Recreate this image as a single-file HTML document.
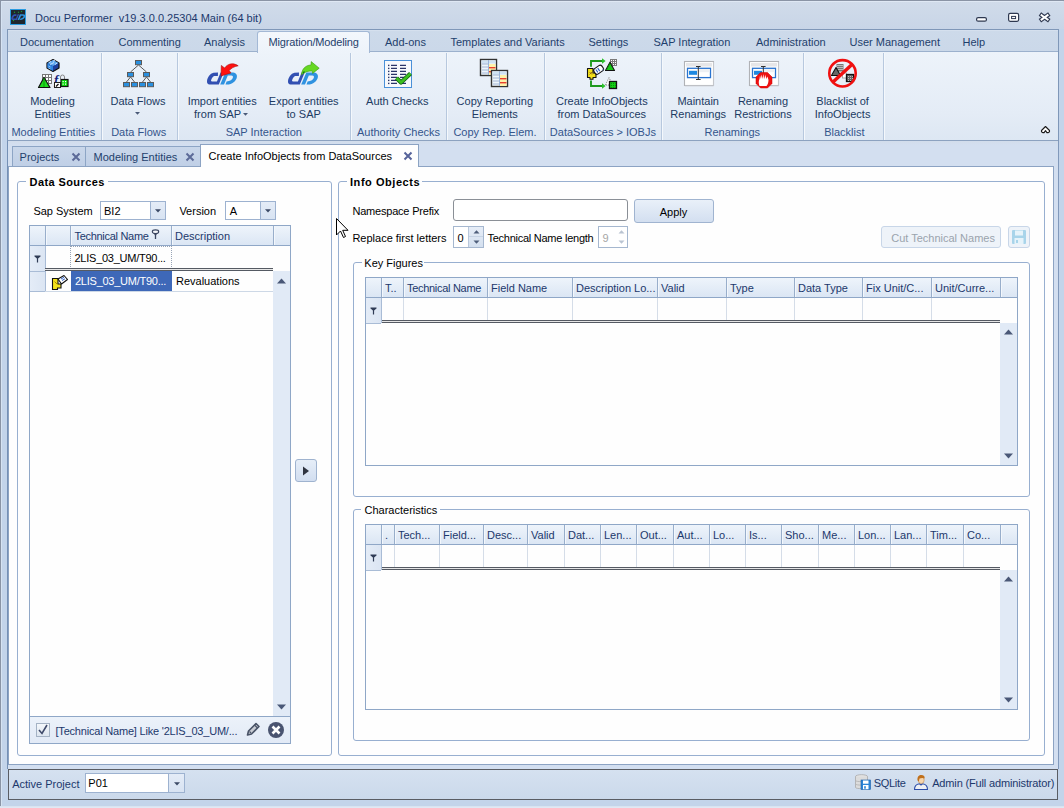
<!DOCTYPE html><html><head><meta charset="utf-8"><style>
html,body{margin:0;padding:0;width:1064px;height:808px;overflow:hidden;background:#c3d4ea}
body>div,body>svg{position:absolute}
.t{position:absolute;white-space:nowrap;font-family:"Liberation Sans",sans-serif;font-size:11px;line-height:13px;letter-spacing:0px}
</style></head><body>
<div style="left:0px;top:0px;width:1064px;height:808px;background:#c3d4ea"></div>
<div style="left:0px;top:0px;width:1064px;height:29px;background:linear-gradient(#d1dcea,#c8d5e7)"></div>
<div style="left:0px;top:0px;width:1064px;height:1px;background:#8a94a5;"></div>
<div style="left:1px;top:1px;width:1062px;height:1px;background:#dfe8f4;"></div>
<div style="left:0px;top:0px;width:1px;height:808px;background:#8a94a5;"></div>
<div style="left:1px;top:1px;width:1px;height:807px;background:#d6e3f2;"></div>
<div style="left:0px;top:806px;width:1064px;height:1px;background:#d9e3f0;"></div>
<div style="left:0px;top:807px;width:1064px;height:1px;background:#dfe8f4;"></div>
<svg style="left:10px;top:9px" width="16" height="16" viewBox="0 0 16 16"><rect x="0" y="0" width="16" height="16" fill="#2a9be0"/><rect x="1" y="1" width="14" height="14" fill="#1e262e"/><g transform="translate(-0.6,-1.6) scale(0.47)">
<path d="M15 14.4 L10.5 14.8 C7 15.5 4.5 19.5 4 23 C3.8 25 4.8 26.6 6.5 26.6 L15.8 26.6 L20.7 14.5 L17.6 14.5 L13.9 23.5 L8.9 23.5 C8.2 23.5 7.9 23 8.1 22.3 C8.7 20 10 18.5 11.2 18.1 L14.9 18.1 Z" fill="#3250b2"/>
<path d="M17.2 26.6 L22.3 14.4 L29 14.4 C32.6 14.4 34.3 16.2 33.9 19 C33.4 23 29 26.6 24 26.6 L22.5 26.6 L23.6 23.5 C27 23.5 29.4 21.6 29.9 19.6 C30.2 18.3 29.6 17.6 28.2 17.6 L24.8 17.6 L21 26.6 Z" fill="#2f92e0"/>
</g><circle cx="4.5" cy="3.3" r="0.7" fill="#1c9a3a"/><circle cx="8.5" cy="3.3" r="0.7" fill="#1c9a3a"/><circle cx="11.5" cy="2.5" r="0.7" fill="#1c9a3a"/><circle cx="3.5" cy="11.5" r="0.7" fill="#1c9a3a"/></svg>
<div class="t" style="left:35px;top:12px;color:#1c386c;">Docu Performer&nbsp; v19.3.0.0.25304 Main (64 bit)</div>
<svg style="left:972px;top:8px" width="84" height="18" viewBox="0 0 84 18">
<rect x="4.6" y="9.6" width="9.8" height="3.6" rx="1.5" fill="#fff" stroke="#2e3850" stroke-width="1.2"/>
<rect x="36.6" y="5.4" width="10" height="7.9" rx="1.5" fill="#fff" stroke="#2e3850" stroke-width="1.2"/>
<rect x="39.6" y="8.4" width="4" height="2.2" fill="#fff" stroke="#2e3850" stroke-width="1"/>
<path d="M69.6 7.2 L75.6 11.5 M75.6 7.2 L69.6 11.5" stroke="#2e3850" stroke-width="4.2" stroke-linecap="square"/>
<path d="M69.6 7.2 L75.6 11.5 M75.6 7.2 L69.6 11.5" stroke="#fff" stroke-width="2" stroke-linecap="square"/>
</svg>
<div style="left:7px;top:29px;width:1052px;height:112px;background:linear-gradient(#cddaea,#c6d4e7 60%,#c8d6e9);border:1px solid #7f97b8;box-sizing:border-box"></div>
<div style="left:8px;top:30px;width:1050px;height:1px;background:#d5e0ee;"></div>
<div style="left:8px;top:51px;width:1050px;height:1px;background:#9cb1cd;"></div>
<div style="left:8px;top:52px;width:1050px;height:88px;background:linear-gradient(#edf3fa 0%,#e4ecf6 70%,#dde7f3 100%)"></div>
<div style="left:8px;top:140px;width:1050px;height:1px;background:#8ca2c0;"></div>
<div style="left:257px;top:31px;width:113px;height:22px;background:linear-gradient(#f3f7fc,#edf3fa);border:1px solid #a3b8d5;border-bottom:none;border-radius:3px 3px 0 0;box-sizing:border-box"></div>
<div class="t" style="left:20px;top:36px;color:#1f3f6c;">Documentation</div>
<div class="t" style="left:118.5px;top:36px;color:#1f3f6c;">Commenting</div>
<div class="t" style="left:204px;top:36px;color:#1f3f6c;">Analysis</div>
<div class="t" style="left:268.5px;top:36px;color:#1f3f6c;;letter-spacing:-0.15px">Migration/Modeling</div>
<div class="t" style="left:385px;top:36px;color:#1f3f6c;">Add-ons</div>
<div class="t" style="left:450.5px;top:36px;color:#1f3f6c;">Templates and Variants</div>
<div class="t" style="left:588.5px;top:36px;color:#1f3f6c;">Settings</div>
<div class="t" style="left:653.5px;top:36px;color:#1f3f6c;">SAP Integration</div>
<div class="t" style="left:756px;top:36px;color:#1f3f6c;">Administration</div>
<div class="t" style="left:849.5px;top:36px;color:#1f3f6c;">User Management</div>
<div class="t" style="left:962.5px;top:36px;color:#1f3f6c;">Help</div>
<div style="left:101px;top:53px;width:1px;height:87px;background:#b7c8de;"></div>
<div style="left:102px;top:53px;width:1px;height:87px;background:#f4f8fc;"></div>
<div style="left:177px;top:53px;width:1px;height:87px;background:#b7c8de;"></div>
<div style="left:178px;top:53px;width:1px;height:87px;background:#f4f8fc;"></div>
<div style="left:350px;top:53px;width:1px;height:87px;background:#b7c8de;"></div>
<div style="left:351px;top:53px;width:1px;height:87px;background:#f4f8fc;"></div>
<div style="left:446px;top:53px;width:1px;height:87px;background:#b7c8de;"></div>
<div style="left:447px;top:53px;width:1px;height:87px;background:#f4f8fc;"></div>
<div style="left:544px;top:53px;width:1px;height:87px;background:#b7c8de;"></div>
<div style="left:545px;top:53px;width:1px;height:87px;background:#f4f8fc;"></div>
<div style="left:661px;top:53px;width:1px;height:87px;background:#b7c8de;"></div>
<div style="left:662px;top:53px;width:1px;height:87px;background:#f4f8fc;"></div>
<div style="left:803px;top:53px;width:1px;height:87px;background:#b7c8de;"></div>
<div style="left:804px;top:53px;width:1px;height:87px;background:#f4f8fc;"></div>
<div style="left:883px;top:53px;width:1px;height:87px;background:#b7c8de;"></div>
<div style="left:884px;top:53px;width:1px;height:87px;background:#f4f8fc;"></div>
<div class="t" style="left:-47.5px;top:95px;width:200px;text-align:center;color:#203a62;">Modeling</div>
<div class="t" style="left:-47.5px;top:108px;width:200px;text-align:center;color:#203a62;">Entities</div>
<div class="t" style="left:38.0px;top:95px;width:200px;text-align:center;color:#203a62;">Data Flows</div>
<div class="t" style="left:122.19999999999999px;top:95px;width:200px;text-align:center;color:#203a62;">Import entities</div>
<div class="t" style="left:122.19999999999999px;top:108px;width:200px;text-align:center;color:#203a62;">from SAP&nbsp;&nbsp;&nbsp;</div>
<div class="t" style="left:203.7px;top:95px;width:200px;text-align:center;color:#203a62;">Export entities</div>
<div class="t" style="left:203.7px;top:108px;width:200px;text-align:center;color:#203a62;">to SAP</div>
<div class="t" style="left:297.3px;top:95px;width:200px;text-align:center;color:#203a62;">Auth Checks</div>
<div class="t" style="left:394.8px;top:95px;width:200px;text-align:center;color:#203a62;">Copy Reporting</div>
<div class="t" style="left:394.8px;top:108px;width:200px;text-align:center;color:#203a62;">Elements</div>
<div class="t" style="left:501.79999999999995px;top:95px;width:200px;text-align:center;color:#203a62;">Create InfoObjects</div>
<div class="t" style="left:501.79999999999995px;top:108px;width:200px;text-align:center;color:#203a62;">from DataSources</div>
<div class="t" style="left:598.2px;top:95px;width:200px;text-align:center;color:#203a62;">Maintain</div>
<div class="t" style="left:598.2px;top:108px;width:200px;text-align:center;color:#203a62;">Renamings</div>
<div class="t" style="left:663.0px;top:95px;width:200px;text-align:center;color:#203a62;">Renaming</div>
<div class="t" style="left:663.0px;top:108px;width:200px;text-align:center;color:#203a62;">Restrictions</div>
<div class="t" style="left:742.6px;top:95px;width:200px;text-align:center;color:#203a62;">Blacklist of</div>
<div class="t" style="left:742.6px;top:108px;width:200px;text-align:center;color:#203a62;">InfoObjects</div>
<div class="t" style="left:-46.7px;top:126px;width:200px;text-align:center;color:#34558c;">Modeling Entities</div>
<div class="t" style="left:38.69999999999999px;top:126px;width:200px;text-align:center;color:#34558c;">Data Flows</div>
<div class="t" style="left:163.8px;top:126px;width:200px;text-align:center;color:#34558c;">SAP Interaction</div>
<div class="t" style="left:298.5px;top:126px;width:200px;text-align:center;color:#34558c;">Authority Checks</div>
<div class="t" style="left:395.0px;top:126px;width:200px;text-align:center;color:#34558c;">Copy Rep. Elem.</div>
<div class="t" style="left:502.9px;top:126px;width:200px;text-align:center;color:#34558c;">DataSources &gt; IOBJs</div>
<div class="t" style="left:632.3px;top:126px;width:200px;text-align:center;color:#34558c;">Renamings</div>
<div class="t" style="left:744.4px;top:126px;width:200px;text-align:center;color:#34558c;">Blacklist</div>
<svg style="left:135.3px;top:112.2px" width="6" height="3" viewBox="0 0 6 3"><path d="M0 0H5L2.5 2.8Z" fill="#4a5a78"/></svg>
<svg style="left:243.3px;top:113.3px" width="6" height="3" viewBox="0 0 6 3"><path d="M0 0H5L2.5 2.8Z" fill="#4a5a78"/></svg>
<svg style="left:1040px;top:125px" width="11" height="9" viewBox="0 0 11 9"><path d="M1.5 5.5 L5.5 1.5 L9.5 5.5 L9.5 6.8 L8.3 7.6 L6.9 7.6 L5.5 5.6 L4.1 7.6 L2.7 7.6 L1.5 6.8 Z" fill="#fff" stroke="#1a1a1a" stroke-width="1.1" stroke-linejoin="round"/></svg>
<div style="left:7px;top:141px;width:1052px;height:628px;background:linear-gradient(#d2ddeb 0px,#d3dff0 4px,#d3dff0 100%);border-left:1px solid #7590b5;border-right:1px solid #8199bb;box-sizing:border-box"></div>
<div style="left:12px;top:146px;width:74px;height:21px;background:linear-gradient(#c9d7ea,#bfcfe6);border:1px solid #8da5c5;border-bottom:none;box-sizing:border-box"></div>
<div style="left:85px;top:146px;width:116px;height:21px;background:linear-gradient(#c9d7ea,#bfcfe6);border:1px solid #8da5c5;border-bottom:none;box-sizing:border-box"></div>
<div class="t" style="left:19.6px;top:151px;color:#1f3f6c;">Projects</div>
<div class="t" style="left:93.5px;top:151px;color:#1f3f6c;">Modeling Entities</div>
<div style="left:8px;top:166px;width:1046px;height:599px;background:#fefefe;border:1px solid #8ca3c3;box-sizing:border-box"></div>
<div style="left:200px;top:144px;width:219px;height:23px;background:#fefefe;border:1px solid #8ca3c3;border-bottom:none;box-sizing:border-box"></div>
<div class="t" style="left:208.6px;top:150px;color:#000;">Create InfoObjects from DataSources</div>
<svg style="left:70.5px;top:151.5px" width="10" height="10" viewBox="0 0 10 10"><path d="M1.5 1.5L8.5 8.5M8.5 1.5L1.5 8.5" stroke="#5c6a98" stroke-width="2"/></svg>
<svg style="left:185px;top:151.5px" width="10" height="10" viewBox="0 0 10 10"><path d="M1.5 1.5L8.5 8.5M8.5 1.5L1.5 8.5" stroke="#5c6a98" stroke-width="2"/></svg>
<svg style="left:402.5px;top:150.5px" width="10" height="10" viewBox="0 0 10 10"><path d="M1.5 1.5L8.5 8.5M8.5 1.5L1.5 8.5" stroke="#56639a" stroke-width="2"/></svg>
<div style="left:8px;top:769px;width:1050px;height:31px;background:linear-gradient(#d5e1f0,#cbd9eb);border:1px solid #5a5d64;box-sizing:border-box"></div>
<div class="t" style="left:12.2px;top:778px;color:#1c386c;">Active Project</div>
<div class="t" style="left:873.7px;top:777px;color:#1c386c;;letter-spacing:-0.3px">SQLite</div>
<div class="t" style="left:932.2px;top:777px;color:#1c386c;;letter-spacing:-0.15px">Admin (Full administrator)</div>
<div style="left:17px;top:181px;width:315px;height:575px;border:1px solid #98afd0;border-radius:3px;box-sizing:border-box"></div>
<div style="left:26px;top:180px;width:82px;height:3px;background:#fefefe"></div>
<div class="t" style="left:29.6px;top:176px;color:#000;font-weight:bold;letter-spacing:0.4px">Data Sources</div>
<div style="left:338px;top:181px;width:707px;height:575px;border:1px solid #98afd0;border-radius:3px;box-sizing:border-box"></div>
<div style="left:347px;top:180px;width:75px;height:3px;background:#fefefe"></div>
<div class="t" style="left:350px;top:176px;color:#000;font-weight:bold;letter-spacing:0.55px">Info Objects</div>
<div style="left:353px;top:262px;width:677px;height:235px;border:1px solid #98afd0;border-radius:3px;box-sizing:border-box"></div>
<div style="left:362px;top:261px;width:62px;height:3px;background:#fefefe"></div>
<div class="t" style="left:364.3px;top:257px;color:#000;">Key Figures</div>
<div style="left:353px;top:509px;width:677px;height:232px;border:1px solid #98afd0;border-radius:3px;box-sizing:border-box"></div>
<div style="left:361px;top:508px;width:79px;height:3px;background:#fefefe"></div>
<div class="t" style="left:364.5px;top:504px;color:#000;">Characteristics</div>
<div class="t" style="left:33.4px;top:205px;color:#000;">Sap System</div>
<div style="left:100px;top:201px;width:66px;height:19px;background:#fff;border:1px solid #9db2d0;box-sizing:border-box"></div>
<div style="left:150px;top:202px;width:15px;height:17px;background:linear-gradient(#e4ecf7,#d8e3f2);border-left:1px solid #9db2d0;box-sizing:border-box"></div>
<svg style="left:155.0px;top:208.5px" width="6" height="4" viewBox="0 0 6 4"><path d="M0 0.2H6L3 3.4Z" fill="#3c4a66"/></svg>
<div class="t" style="left:104px;top:205px;color:#000;">BI2</div>
<div class="t" style="left:179.4px;top:205px;color:#000;">Version</div>
<div style="left:225px;top:201px;width:51px;height:19px;background:#fff;border:1px solid #9db2d0;box-sizing:border-box"></div>
<div style="left:260px;top:202px;width:15px;height:17px;background:linear-gradient(#e4ecf7,#d8e3f2);border-left:1px solid #9db2d0;box-sizing:border-box"></div>
<svg style="left:265.0px;top:208.5px" width="6" height="4" viewBox="0 0 6 4"><path d="M0 0.2H6L3 3.4Z" fill="#3c4a66"/></svg>
<div class="t" style="left:229.7px;top:205px;color:#000;">A</div>
<div style="left:85px;top:773px;width:100px;height:20px;background:#fff;border:1px solid #9db2d0;box-sizing:border-box"></div>
<div style="left:168px;top:774px;width:16px;height:18px;background:linear-gradient(#e4ecf7,#d8e3f2);border-left:1px solid #9db2d0;box-sizing:border-box"></div>
<svg style="left:173.5px;top:781.5px" width="6" height="4" viewBox="0 0 6 4"><path d="M0 0.2H6L3 3.4Z" fill="#3c4a66"/></svg>
<div class="t" style="left:88.3px;top:777px;color:#000;">P01</div>
<div style="left:29px;top:225px;width:262px;height:519px;border:1px solid #8fa7c7;box-sizing:border-box;background:#fefefe"></div>
<div style="left:30px;top:226px;width:260px;height:19px;background:linear-gradient(#eef4fb,#dbe6f4)"></div>
<div style="left:30px;top:245px;width:260px;height:1px;background:#8fa7c7;"></div>
<div style="left:45px;top:226px;width:1px;height:19px;background:#98aecb;"></div>
<div style="left:46px;top:226px;width:1px;height:19px;background:#f3f7fc;"></div>
<div style="left:70px;top:226px;width:1px;height:19px;background:#98aecb;"></div>
<div style="left:71px;top:226px;width:1px;height:19px;background:#f3f7fc;"></div>
<div style="left:171px;top:226px;width:1px;height:19px;background:#98aecb;"></div>
<div style="left:172px;top:226px;width:1px;height:19px;background:#f3f7fc;"></div>
<div style="left:273px;top:226px;width:1px;height:19px;background:#98aecb;"></div>
<div style="left:274px;top:226px;width:1px;height:19px;background:#f3f7fc;"></div>
<div class="t" style="left:74.5px;top:230px;color:#1c386c;letter-spacing:-0.3px">Technical Name</div>
<svg style="left:151px;top:228.6px" width="9" height="11" viewBox="0 0 9 11"><path d="M1.2 2.8 L4.5 7 L7.8 2.8 Z" fill="#3a4560"/><ellipse cx="4.5" cy="2.7" rx="3.2" ry="1.8" fill="#f4f6fa" stroke="#3a4560" stroke-width="1.1"/><path d="M4.5 6 V10" stroke="#3a4560" stroke-width="1.3"/></svg>
<div class="t" style="left:175px;top:230px;color:#1c386c;">Description</div>
<div style="left:30px;top:246px;width:15px;height:45px;background:linear-gradient(90deg,#e4ecf7,#dbe5f3)"></div>
<div style="left:45px;top:246px;width:1px;height:45px;background:#a9bcd6;"></div>
<div style="left:30px;top:271px;width:15px;height:1px;background:#a9bcd6;"></div>
<div style="left:30px;top:291px;width:15px;height:1px;background:#a9bcd6;"></div>
<svg style="left:34px;top:255px" width="8" height="8" viewBox="0 0 8 8"><path d="M0.5 0.5H6.5V1.6L4.1 3.6V7.5H2.9V3.6L0.5 1.6Z" fill="#2f3b55"/></svg>
<div style="left:70px;top:246px;width:102px;height:23px;border:1px dotted #98a4b6;box-sizing:border-box"></div>
<div class="t" style="left:74.5px;top:251.5px;color:#000;;letter-spacing:-0.25px">2LIS_03_UM/T90...</div>
<div style="left:45px;top:268px;width:228px;height:1px;background:#555a63;"></div>
<div style="left:45px;top:270px;width:228px;height:1px;background:#555a63;"></div>
<div style="left:45px;top:269px;width:228px;height:1px;background:#e8e8e8;"></div>
<div style="left:71px;top:271px;width:101px;height:20px;background:#3e68b8"></div>
<div class="t" style="left:75px;top:275px;color:#fff;;letter-spacing:-0.25px">2LIS_03_UM/T90...</div>
<div class="t" style="left:176px;top:275px;color:#000;">Revaluations</div>
<div style="left:45px;top:291px;width:228px;height:1px;background:#cdd8e6;"></div>
<svg style="left:51px;top:273px" width="18" height="18" viewBox="0 0 18 18">
<path d="M1.5 5.5 H7 V11 L10 11 L10 15 H6.5 V16.5 H1.5 Z" fill="#f2e21a" stroke="#111" stroke-width="1.1"/>
<path d="M7 6 L13 2.5 L16.5 6.5 L10.5 11 Z" fill="#fff" stroke="#111" stroke-width="1.1" stroke-linejoin="round"/>
<path d="M10 6 L13 4.3 M11 7.5 L14 5.8" stroke="#2a5ec8" stroke-width="1"/>
<path d="M3.5 8.5 L6 11" stroke="#a07000" stroke-width="0.8"/></svg>
<div style="left:273px;top:271px;width:17px;height:445px;background:#e1eaf6"></div>
<svg style="left:277px;top:278px" width="10" height="6" viewBox="0 0 10 6"><path d="M0 5.5H9L4.5 0.5Z" fill="#4a5877"/></svg>
<svg style="left:277px;top:704px" width="10" height="6" viewBox="0 0 10 6"><path d="M0 0.5H9L4.5 5.5Z" fill="#4a5877"/></svg>
<div style="left:30px;top:716px;width:260px;height:27px;background:linear-gradient(#ecf2fa,#e2eaf6)"></div>
<div style="left:30px;top:716px;width:260px;height:1px;background:#8fa7c7;"></div>
<div style="left:36px;top:723px;width:14px;height:14px;background:linear-gradient(#f4f7fb,#dde5ef);border:1px solid #a4b2c4;box-sizing:border-box"></div>
<svg style="left:38px;top:724px" width="10" height="11" viewBox="0 0 10 11"><path d="M1 6 L4 9.5 L9 1" fill="none" stroke="#3f4a6a" stroke-width="1.6"/></svg>
<div class="t" style="left:55.5px;top:725px;color:#1c386c;;letter-spacing:-0.2px">[Technical Name] Like '2LIS_03_UM/...</div>
<svg style="left:245px;top:721px" width="16" height="16" viewBox="0 0 16 16"><path d="M2.5 14 L3.5 10 L11 2.5 L14 5.5 L6.5 13 Z" fill="#c8ccd4" stroke="#4a5468" stroke-width="1.6" stroke-linejoin="round"/><path d="M9.5 4 L12.5 7 M4.5 10.5 L6 12" stroke="#4a5468" stroke-width="1.1"/></svg>
<svg style="left:267px;top:721px" width="18" height="18" viewBox="0 0 18 18"><circle cx="9" cy="9" r="8" fill="#4a5470"/><path d="M5.5 5.5L12.5 12.5M12.5 5.5L5.5 12.5" stroke="#fff" stroke-width="2.6"/></svg>
<div style="left:295px;top:459px;width:22px;height:23px;background:linear-gradient(#e6eef8,#d2def0);border:1px solid #9fb3cf;border-radius:3px;box-sizing:border-box"></div>
<svg style="left:302px;top:466px" width="8" height="10" viewBox="0 0 8 10"><path d="M1 0.5V9.5L7 5Z" fill="#2f3440"/></svg>
<div class="t" style="left:352.4px;top:205px;color:#000;;letter-spacing:-0.2px">Namespace Prefix</div>
<div style="left:453px;top:199px;width:175px;height:22px;background:#fff;border:1px solid #8a8f96;border-radius:3px;box-sizing:border-box"></div>
<div style="left:634px;top:199px;width:80px;height:24px;background:linear-gradient(#e9f0f9,#d3dff0);border:1px solid #a0b4d0;border-radius:3px;box-sizing:border-box"></div>
<div class="t" style="left:659.7px;top:206px;color:#000;">Apply</div>
<div class="t" style="left:352.4px;top:232px;color:#000;">Replace first letters</div>
<div style="left:453px;top:226px;width:31px;height:22px;background:#fff;border:1px solid #a5b7cf;box-sizing:border-box"></div>
<div style="left:468px;top:227px;width:15px;height:20px;background:linear-gradient(#e6edf7,#d4e0ef);border-left:1px solid #b8c7db;box-sizing:border-box"></div>
<svg style="left:472.5px;top:230px" width="7" height="14" viewBox="0 0 7 14"><path d="M0.5 3.5H6.5L3.5 0.3Z M0.5 10.5H6.5L3.5 13.7Z" fill="#4e5e7a"/></svg>
<div style="left:469px;top:236px;width:14px;height:1px;background:#c6d3e4;"></div>
<div class="t" style="left:457.6px;top:232px;color:#000;">0</div>
<div class="t" style="left:487.4px;top:232px;color:#000;;letter-spacing:-0.25px">Technical Name length</div>
<div style="left:598px;top:226px;width:30px;height:22px;background:#fff;border:1px solid #a5b7cf;box-sizing:border-box"></div>
<svg style="left:617.5px;top:230px" width="7" height="14" viewBox="0 0 7 14"><path d="M0.5 3.5H6.5L3.5 0.3Z M0.5 10.5H6.5L3.5 13.7Z" fill="#bac4d2"/></svg>
<div class="t" style="left:602.6px;top:232px;color:#a6a6a6;">9</div>
<div style="left:881px;top:226px;width:120px;height:22px;background:#eef3f9;border:1px solid #c8d6e8;border-radius:3px;box-sizing:border-box"></div>
<div class="t" style="left:891.2px;top:232px;color:#9aa3ad;">Cut Technical Names</div>
<div style="left:1008px;top:226px;width:22px;height:22px;background:#eef3f9;border:1px solid #c8d6e8;border-radius:3px;box-sizing:border-box"></div>
<svg style="left:1011px;top:229px" width="16" height="16" viewBox="0 0 16 16"><rect x="1" y="1" width="14" height="14" rx="1" fill="#a8d4ea"/><rect x="4" y="1.5" width="8" height="5" fill="#e6f3fa"/><rect x="3.5" y="9" width="9" height="6" fill="#e6f3fa"/><rect x="5" y="11" width="2" height="3" fill="#a8d4ea"/></svg>
<div style="left:365px;top:277px;width:653px;height:189px;border:1px solid #8fa7c7;box-sizing:border-box;background:#fefefe"></div>
<div style="left:366px;top:278px;width:651px;height:19px;background:linear-gradient(#eef4fb,#dbe6f4)"></div>
<div style="left:366px;top:297px;width:651px;height:1px;background:#8fa7c7;"></div>
<div style="left:381px;top:278px;width:1px;height:19px;background:#98aecb;"></div>
<div style="left:382px;top:278px;width:1px;height:19px;background:#f3f7fc;"></div>
<div style="left:403px;top:278px;width:1px;height:19px;background:#98aecb;"></div>
<div style="left:404px;top:278px;width:1px;height:19px;background:#f3f7fc;"></div>
<div style="left:487px;top:278px;width:1px;height:19px;background:#98aecb;"></div>
<div style="left:488px;top:278px;width:1px;height:19px;background:#f3f7fc;"></div>
<div style="left:572px;top:278px;width:1px;height:19px;background:#98aecb;"></div>
<div style="left:573px;top:278px;width:1px;height:19px;background:#f3f7fc;"></div>
<div style="left:657px;top:278px;width:1px;height:19px;background:#98aecb;"></div>
<div style="left:658px;top:278px;width:1px;height:19px;background:#f3f7fc;"></div>
<div style="left:726px;top:278px;width:1px;height:19px;background:#98aecb;"></div>
<div style="left:727px;top:278px;width:1px;height:19px;background:#f3f7fc;"></div>
<div style="left:794px;top:278px;width:1px;height:19px;background:#98aecb;"></div>
<div style="left:795px;top:278px;width:1px;height:19px;background:#f3f7fc;"></div>
<div style="left:862px;top:278px;width:1px;height:19px;background:#98aecb;"></div>
<div style="left:863px;top:278px;width:1px;height:19px;background:#f3f7fc;"></div>
<div style="left:931px;top:278px;width:1px;height:19px;background:#98aecb;"></div>
<div style="left:932px;top:278px;width:1px;height:19px;background:#f3f7fc;"></div>
<div style="left:1000px;top:278px;width:1px;height:19px;background:#98aecb;"></div>
<div style="left:1001px;top:278px;width:1px;height:19px;background:#f3f7fc;"></div>
<div class="t" style="left:385px;top:282px;color:#1c386c;">T..</div>
<div class="t" style="left:407px;top:282px;color:#1c386c;;letter-spacing:-0.3px">Technical Name</div>
<div class="t" style="left:491px;top:282px;color:#1c386c;">Field Name</div>
<div class="t" style="left:576px;top:282px;color:#1c386c;">Description Lo...</div>
<div class="t" style="left:661px;top:282px;color:#1c386c;">Valid</div>
<div class="t" style="left:730px;top:282px;color:#1c386c;">Type</div>
<div class="t" style="left:798px;top:282px;color:#1c386c;">Data Type</div>
<div class="t" style="left:866px;top:282px;color:#1c386c;">Fix Unit/C...</div>
<div class="t" style="left:935px;top:282px;color:#1c386c;">Unit/Curre...</div>
<div style="left:366px;top:298px;width:15px;height:25px;background:linear-gradient(90deg,#e4ecf7,#dbe5f3)"></div>
<div style="left:366px;top:323px;width:15px;height:1px;background:#a9bcd6;"></div>
<svg style="left:370px;top:307px" width="8" height="8" viewBox="0 0 8 8"><path d="M0.5 0.5H6.5V1.6L4.1 3.6V7.5H2.9V3.6L0.5 1.6Z" fill="#2f3b55"/></svg>
<div style="left:381px;top:298px;width:1px;height:23px;background:#d5dde8;"></div>
<div style="left:403px;top:298px;width:1px;height:23px;background:#d5dde8;"></div>
<div style="left:487px;top:298px;width:1px;height:23px;background:#d5dde8;"></div>
<div style="left:572px;top:298px;width:1px;height:23px;background:#d5dde8;"></div>
<div style="left:657px;top:298px;width:1px;height:23px;background:#d5dde8;"></div>
<div style="left:726px;top:298px;width:1px;height:23px;background:#d5dde8;"></div>
<div style="left:794px;top:298px;width:1px;height:23px;background:#d5dde8;"></div>
<div style="left:862px;top:298px;width:1px;height:23px;background:#d5dde8;"></div>
<div style="left:931px;top:298px;width:1px;height:23px;background:#d5dde8;"></div>
<div style="left:381px;top:298px;width:1px;height:25px;background:#a9bcd6;"></div>
<div style="left:382px;top:320px;width:618px;height:1px;background:#555a63;"></div>
<div style="left:382px;top:321px;width:618px;height:1px;background:#e6e6e6;"></div>
<div style="left:382px;top:322px;width:618px;height:1px;background:#555a63;"></div>
<div style="left:1000px;top:323px;width:17px;height:142px;background:#e1eaf6"></div>
<svg style="left:1004px;top:329px" width="10" height="6" viewBox="0 0 10 6"><path d="M0 5.5H9L4.5 0.5Z" fill="#4a5877"/></svg>
<svg style="left:1004px;top:453px" width="10" height="6" viewBox="0 0 10 6"><path d="M0 0.5H9L4.5 5.5Z" fill="#4a5877"/></svg>
<div style="left:365px;top:524px;width:653px;height:186px;border:1px solid #8fa7c7;box-sizing:border-box;background:#fefefe"></div>
<div style="left:366px;top:525px;width:651px;height:19px;background:linear-gradient(#eef4fb,#dbe6f4)"></div>
<div style="left:366px;top:544px;width:651px;height:1px;background:#8fa7c7;"></div>
<div style="left:381px;top:525px;width:1px;height:19px;background:#98aecb;"></div>
<div style="left:382px;top:525px;width:1px;height:19px;background:#f3f7fc;"></div>
<div style="left:394px;top:525px;width:1px;height:19px;background:#98aecb;"></div>
<div style="left:395px;top:525px;width:1px;height:19px;background:#f3f7fc;"></div>
<div style="left:439px;top:525px;width:1px;height:19px;background:#98aecb;"></div>
<div style="left:440px;top:525px;width:1px;height:19px;background:#f3f7fc;"></div>
<div style="left:483px;top:525px;width:1px;height:19px;background:#98aecb;"></div>
<div style="left:484px;top:525px;width:1px;height:19px;background:#f3f7fc;"></div>
<div style="left:527px;top:525px;width:1px;height:19px;background:#98aecb;"></div>
<div style="left:528px;top:525px;width:1px;height:19px;background:#f3f7fc;"></div>
<div style="left:564px;top:525px;width:1px;height:19px;background:#98aecb;"></div>
<div style="left:565px;top:525px;width:1px;height:19px;background:#f3f7fc;"></div>
<div style="left:600px;top:525px;width:1px;height:19px;background:#98aecb;"></div>
<div style="left:601px;top:525px;width:1px;height:19px;background:#f3f7fc;"></div>
<div style="left:636px;top:525px;width:1px;height:19px;background:#98aecb;"></div>
<div style="left:637px;top:525px;width:1px;height:19px;background:#f3f7fc;"></div>
<div style="left:673px;top:525px;width:1px;height:19px;background:#98aecb;"></div>
<div style="left:674px;top:525px;width:1px;height:19px;background:#f3f7fc;"></div>
<div style="left:709px;top:525px;width:1px;height:19px;background:#98aecb;"></div>
<div style="left:710px;top:525px;width:1px;height:19px;background:#f3f7fc;"></div>
<div style="left:745px;top:525px;width:1px;height:19px;background:#98aecb;"></div>
<div style="left:746px;top:525px;width:1px;height:19px;background:#f3f7fc;"></div>
<div style="left:781px;top:525px;width:1px;height:19px;background:#98aecb;"></div>
<div style="left:782px;top:525px;width:1px;height:19px;background:#f3f7fc;"></div>
<div style="left:818px;top:525px;width:1px;height:19px;background:#98aecb;"></div>
<div style="left:819px;top:525px;width:1px;height:19px;background:#f3f7fc;"></div>
<div style="left:854px;top:525px;width:1px;height:19px;background:#98aecb;"></div>
<div style="left:855px;top:525px;width:1px;height:19px;background:#f3f7fc;"></div>
<div style="left:890px;top:525px;width:1px;height:19px;background:#98aecb;"></div>
<div style="left:891px;top:525px;width:1px;height:19px;background:#f3f7fc;"></div>
<div style="left:926px;top:525px;width:1px;height:19px;background:#98aecb;"></div>
<div style="left:927px;top:525px;width:1px;height:19px;background:#f3f7fc;"></div>
<div style="left:963px;top:525px;width:1px;height:19px;background:#98aecb;"></div>
<div style="left:964px;top:525px;width:1px;height:19px;background:#f3f7fc;"></div>
<div style="left:1000px;top:525px;width:1px;height:19px;background:#98aecb;"></div>
<div style="left:1001px;top:525px;width:1px;height:19px;background:#f3f7fc;"></div>
<div class="t" style="left:385px;top:529px;color:#1c386c;">.</div>
<div class="t" style="left:398px;top:529px;color:#1c386c;">Tech...</div>
<div class="t" style="left:443px;top:529px;color:#1c386c;">Field...</div>
<div class="t" style="left:487px;top:529px;color:#1c386c;">Desc...</div>
<div class="t" style="left:531px;top:529px;color:#1c386c;">Valid</div>
<div class="t" style="left:568px;top:529px;color:#1c386c;">Dat...</div>
<div class="t" style="left:604px;top:529px;color:#1c386c;">Len...</div>
<div class="t" style="left:640px;top:529px;color:#1c386c;">Out...</div>
<div class="t" style="left:677px;top:529px;color:#1c386c;">Aut...</div>
<div class="t" style="left:713px;top:529px;color:#1c386c;">Lo...</div>
<div class="t" style="left:749px;top:529px;color:#1c386c;">Is...</div>
<div class="t" style="left:785px;top:529px;color:#1c386c;">Sho...</div>
<div class="t" style="left:822px;top:529px;color:#1c386c;">Me...</div>
<div class="t" style="left:858px;top:529px;color:#1c386c;">Lon...</div>
<div class="t" style="left:894px;top:529px;color:#1c386c;">Lan...</div>
<div class="t" style="left:930px;top:529px;color:#1c386c;">Tim...</div>
<div class="t" style="left:967px;top:529px;color:#1c386c;">Co...</div>
<div style="left:366px;top:545px;width:15px;height:25px;background:linear-gradient(90deg,#e4ecf7,#dbe5f3)"></div>
<div style="left:366px;top:570px;width:15px;height:1px;background:#a9bcd6;"></div>
<svg style="left:370px;top:554px" width="8" height="8" viewBox="0 0 8 8"><path d="M0.5 0.5H6.5V1.6L4.1 3.6V7.5H2.9V3.6L0.5 1.6Z" fill="#2f3b55"/></svg>
<div style="left:381px;top:545px;width:1px;height:23px;background:#d5dde8;"></div>
<div style="left:394px;top:545px;width:1px;height:23px;background:#d5dde8;"></div>
<div style="left:439px;top:545px;width:1px;height:23px;background:#d5dde8;"></div>
<div style="left:483px;top:545px;width:1px;height:23px;background:#d5dde8;"></div>
<div style="left:527px;top:545px;width:1px;height:23px;background:#d5dde8;"></div>
<div style="left:564px;top:545px;width:1px;height:23px;background:#d5dde8;"></div>
<div style="left:600px;top:545px;width:1px;height:23px;background:#d5dde8;"></div>
<div style="left:636px;top:545px;width:1px;height:23px;background:#d5dde8;"></div>
<div style="left:673px;top:545px;width:1px;height:23px;background:#d5dde8;"></div>
<div style="left:709px;top:545px;width:1px;height:23px;background:#d5dde8;"></div>
<div style="left:745px;top:545px;width:1px;height:23px;background:#d5dde8;"></div>
<div style="left:781px;top:545px;width:1px;height:23px;background:#d5dde8;"></div>
<div style="left:818px;top:545px;width:1px;height:23px;background:#d5dde8;"></div>
<div style="left:854px;top:545px;width:1px;height:23px;background:#d5dde8;"></div>
<div style="left:890px;top:545px;width:1px;height:23px;background:#d5dde8;"></div>
<div style="left:926px;top:545px;width:1px;height:23px;background:#d5dde8;"></div>
<div style="left:963px;top:545px;width:1px;height:23px;background:#d5dde8;"></div>
<div style="left:381px;top:545px;width:1px;height:25px;background:#a9bcd6;"></div>
<div style="left:382px;top:567px;width:618px;height:1px;background:#555a63;"></div>
<div style="left:382px;top:568px;width:618px;height:1px;background:#e6e6e6;"></div>
<div style="left:382px;top:569px;width:618px;height:1px;background:#555a63;"></div>
<div style="left:1000px;top:570px;width:17px;height:139px;background:#e1eaf6"></div>
<svg style="left:1004px;top:576px" width="10" height="6" viewBox="0 0 10 6"><path d="M0 5.5H9L4.5 0.5Z" fill="#4a5877"/></svg>
<svg style="left:1004px;top:697px" width="10" height="6" viewBox="0 0 10 6"><path d="M0 0.5H9L4.5 5.5Z" fill="#4a5877"/></svg>
<svg style="left:336px;top:218px" width="13" height="21" viewBox="0 0 13 21"><path d="M0.5 0.5 V17 L4.5 13 L7.5 19.5 L9.5 18.5 L6.7 12.3 L12 12.3 Z" fill="#fff" stroke="#000" stroke-width="1"/></svg>
<svg style="left:34px;top:56px" width="38" height="36" viewBox="0 0 38 36">
<path d="M13 7 L19 3.5 L25 7 L25 12 L19 15.5 L13 12 Z" fill="#1d3f9c" stroke="#111" stroke-width="1.2" stroke-linejoin="round"/>
<path d="M13.4 7 L19 3.9 L24.6 7 L19 10 Z" fill="#5da8f0"/>
<path d="M13.4 7.3 L19 10.2 L19 15 L13.4 11.8 Z" fill="#2f86e0"/>
<path d="M15 6.5 L17 5.5 M18 7.5 L20 6.5 M16 8.5 L18 7.5 M19 5 L21 4.5 M21 8.5 L23 7.2" stroke="#cfe6ff" stroke-width="0.9"/>
<path d="M14.5 10 L16.5 11 M14.5 12 L16.5 13" stroke="#9fd0ff" stroke-width="0.8"/>
<rect x="8.5" y="18.5" width="9" height="9" fill="#fff" stroke="#777" stroke-width="1"/>
<path d="M11.5 18.5V27.5M14.5 18.5V27.5M8.5 21.5H17.5M8.5 24.5H17.5" stroke="#777" stroke-width="1"/>
<path d="M4.5 31.5 L10 21.5 L16 31.5 Z" fill="#1edc1e" stroke="#111" stroke-width="1.2" stroke-linejoin="round"/>
<path d="M10 22 L10 31" stroke="#0a9a0a" stroke-width="1"/>
<text x="20" y="28" font-family="Liberation Serif" font-style="italic" font-weight="bold" font-size="13" fill="#12207a">f</text>
<path d="M26.5 23 V21 A2 2 0 0 1 30.5 21 V23" fill="none" stroke="#888" stroke-width="1"/>
<rect x="20.5" y="26.5" width="6" height="5" fill="#fff" stroke="#222" stroke-width="1"/>
<path d="M22 30.5 L24.5 28" stroke="#111" stroke-width="1.3"/>
<rect x="27" y="23.5" width="7" height="7" fill="#0bdc0b" stroke="#111" stroke-width="1.2"/>
<rect x="28.5" y="25.0" width="1.2" height="1.2" fill="#fff"/><rect x="28.5" y="27.5" width="1.2" height="1.2" fill="#fff"/><rect x="31.0" y="25.0" width="1.2" height="1.2" fill="#fff"/><rect x="31.0" y="27.5" width="1.2" height="1.2" fill="#fff"/>
</svg>
<svg style="left:120px;top:56px" width="38" height="36" viewBox="0 0 38 36"><path d="M18.5 9 L10.5 16 M18.5 9 L26.5 16 M10.5 21 L6.5 26 M10.5 21 L14.5 26 M26.5 21 L22.5 26 M26.5 21 L30.5 26" stroke="#5a5a5a" stroke-width="1"/><rect x="15.5" y="4.5" width="6" height="4.2" fill="#2a90e0" stroke="#5a5a5a" stroke-width="1"/><rect x="7.5" y="16.5" width="6" height="4.2" fill="#2a90e0" stroke="#5a5a5a" stroke-width="1"/><rect x="23.5" y="16.5" width="6" height="4.2" fill="#2a90e0" stroke="#5a5a5a" stroke-width="1"/><rect x="3.5" y="26.5" width="6" height="4.2" fill="#2a90e0" stroke="#5a5a5a" stroke-width="1"/><rect x="11.5" y="26.5" width="6" height="4.2" fill="#2a90e0" stroke="#5a5a5a" stroke-width="1"/><rect x="19.5" y="26.5" width="6" height="4.2" fill="#2a90e0" stroke="#5a5a5a" stroke-width="1"/><rect x="27.5" y="26.5" width="6" height="4.2" fill="#2a90e0" stroke="#5a5a5a" stroke-width="1"/></svg>
<svg style="left:203px;top:58px" width="38" height="36" viewBox="0 0 38 36">
<path d="M15 14.4 L10.5 14.8 C7 15.5 4.5 19.5 4 23 C3.8 25 4.8 26.6 6.5 26.6 L15.8 26.6 L20.7 14.5 L17.6 14.5 L13.9 23.5 L8.9 23.5 C8.2 23.5 7.9 23 8.1 22.3 C8.7 20 10 18.5 11.2 18.1 L14.9 18.1 Z" fill="#3250b2"/>
<path d="M17.2 26.6 L22.3 14.4 L29 14.4 C32.6 14.4 34.3 16.2 33.9 19 C33.4 23 29 26.6 24 26.6 L22.5 26.6 L23.6 23.5 C27 23.5 29.4 21.6 29.9 19.6 C30.2 18.3 29.6 17.6 28.2 17.6 L24.8 17.6 L21 26.6 Z" fill="#2f92e0"/>

<path d="M18.3 7.4 L21.6 10 C24.5 5.8 30 4.2 35.2 7.8 C31 8.6 28 10.2 26.2 12.6 L28 14.9 L18 18 Z" fill="#ff1010" stroke="#a81010" stroke-width="0.6" stroke-linejoin="round"/></svg>
<svg style="left:284px;top:58px" width="38" height="36" viewBox="0 0 38 36">
<path d="M15 14.4 L10.5 14.8 C7 15.5 4.5 19.5 4 23 C3.8 25 4.8 26.6 6.5 26.6 L15.8 26.6 L20.7 14.5 L17.6 14.5 L13.9 23.5 L8.9 23.5 C8.2 23.5 7.9 23 8.1 22.3 C8.7 20 10 18.5 11.2 18.1 L14.9 18.1 Z" fill="#3250b2"/>
<path d="M17.2 26.6 L22.3 14.4 L29 14.4 C32.6 14.4 34.3 16.2 33.9 19 C33.4 23 29 26.6 24 26.6 L22.5 26.6 L23.6 23.5 C27 23.5 29.4 21.6 29.9 19.6 C30.2 18.3 29.6 17.6 28.2 17.6 L24.8 17.6 L21 26.6 Z" fill="#2f92e0"/>

<path d="M17.5 16.8 C17.8 11 21.5 7.2 27 7 L27.2 3.6 L35.2 10.2 L28.6 15.4 L28.2 13 C24 12.8 20.5 14.2 17.5 16.8 Z" fill="#66d822" stroke="#3a9a10" stroke-width="0.6" stroke-linejoin="round"/><path d="M19 15 L20.5 13.5" stroke="#117a11" stroke-width="1.2"/></svg>
<svg style="left:379px;top:56px" width="38" height="36" viewBox="0 0 38 36"><rect x="5.5" y="4.5" width="27" height="27" fill="#f7f9fc" stroke="#4a90d8" stroke-width="1"/><rect x="9" y="8.700000000000001" width="1.4" height="1.4" fill="#2a3568"/><path d="M12 9.4H18M21 9.4H27" stroke="#2a3568" stroke-width="1.3"/><rect x="9" y="11.700000000000001" width="1.4" height="1.4" fill="#2a3568"/><path d="M12 12.4H18M21 12.4H27" stroke="#2a3568" stroke-width="1.3"/><rect x="9" y="14.700000000000001" width="1.4" height="1.4" fill="#2a3568"/><path d="M12 15.4H18M21 15.4H27" stroke="#2a3568" stroke-width="1.3"/><rect x="9" y="17.7" width="1.4" height="1.4" fill="#2a3568"/><path d="M12 18.4H18M21 18.4H27" stroke="#2a3568" stroke-width="1.3"/><rect x="9" y="20.7" width="1.4" height="1.4" fill="#2a3568"/><path d="M12 21.4H18M21 21.4H27" stroke="#2a3568" stroke-width="1.3"/><rect x="9" y="23.7" width="1.4" height="1.4" fill="#2a3568"/><path d="M12 24.4H18M21 24.4H27" stroke="#2a3568" stroke-width="1.3"/><rect x="9" y="26.7" width="1.4" height="1.4" fill="#2a3568"/><path d="M12 27.4H18M21 27.4H27" stroke="#2a3568" stroke-width="1.3"/><path d="M17.5 22 L22 26.5 L31.5 17.5" fill="none" stroke="#106010" stroke-width="4.2" stroke-linejoin="round"/><path d="M17.5 22 L22 26.5 L31.5 17.5" fill="none" stroke="#3cc020" stroke-width="2.6" stroke-linejoin="round"/></svg>
<svg style="left:476px;top:55px" width="38" height="36" viewBox="0 0 38 36"><rect x="4.5" y="4.5" width="16" height="16" fill="#eef6fb" stroke="#333" stroke-width="1.4"/><rect x="5.5" y="5.5" width="14" height="3" fill="#cfe2f3"/><path d="M12.5 5V20" stroke="#9ab4d8" stroke-width="1"/><path d="M6 9H12" stroke="#9aaed0" stroke-width="0.9"/><path d="M6 12H12" stroke="#9aaed0" stroke-width="0.9"/><path d="M6 15H12" stroke="#9aaed0" stroke-width="0.9"/><path d="M6 18H12" stroke="#9aaed0" stroke-width="0.9"/><rect x="13" y="9" width="6.5" height="11" fill="#fff2a8"/><rect x="13" y="12" width="6.5" height="1.4" fill="#e84030"/><rect x="13" y="16" width="6.5" height="1.4" fill="#e84030"/><rect x="15.5" y="15.5" width="16" height="16" fill="#eef6fb" stroke="#333" stroke-width="1.4"/><rect x="16.5" y="16.5" width="14" height="3" fill="#cfe2f3"/><path d="M23.5 16V31" stroke="#9ab4d8" stroke-width="1"/><path d="M17 20H23" stroke="#9aaed0" stroke-width="0.9"/><path d="M17 23H23" stroke="#9aaed0" stroke-width="0.9"/><path d="M17 26H23" stroke="#9aaed0" stroke-width="0.9"/><path d="M17 29H23" stroke="#9aaed0" stroke-width="0.9"/><rect x="24" y="20" width="6.5" height="11" fill="#fff2a8"/><rect x="24" y="23" width="6.5" height="1.4" fill="#e84030"/><rect x="24" y="27" width="6.5" height="1.4" fill="#e84030"/></svg>
<svg style="left:583px;top:55px" width="38" height="36" viewBox="0 0 38 36">
<path d="M8 11.8 V6 H19.5" fill="none" stroke="#1e9a1e" stroke-width="1.9"/><path d="M19 3.2 L22.6 6 L19 8.8 Z" fill="#2bc22b"/>
<path d="M8 25.5 V31 H19.5" fill="none" stroke="#1e9a1e" stroke-width="1.9"/><path d="M19 28.2 L22.6 31 L19 33.8 Z" fill="#2bc22b"/>
<rect x="27" y="4" width="7" height="7" fill="#7a7a7a"/>
<rect x="28" y="5" width="1" height="1" fill="#fff"/><rect x="28" y="7" width="1" height="1" fill="#fff"/><rect x="28" y="9" width="1" height="1" fill="#fff"/><rect x="30" y="5" width="1" height="1" fill="#fff"/><rect x="30" y="7" width="1" height="1" fill="#fff"/><rect x="30" y="9" width="1" height="1" fill="#fff"/><rect x="32" y="5" width="1" height="1" fill="#fff"/><rect x="32" y="7" width="1" height="1" fill="#fff"/><rect x="32" y="9" width="1" height="1" fill="#fff"/>
<path d="M22.5 15.5 L27 7.2 L31.5 15.5 Z" fill="#16c816" stroke="#111" stroke-width="1.1" stroke-linejoin="round"/>
<path d="M27 8 L23.5 15" stroke="#0e8a0e" stroke-width="0.8"/>
<path d="M4.5 13.5 H10 V18 H13 V22.5 H10 V24.2 H7 V22.5 H4.5 Z" fill="#f2e01c" stroke="#111" stroke-width="1.1" stroke-linejoin="round"/>
<path d="M6.5 17 L9 19.5 M9 17 L6.5 19.5" stroke="#8a5a10" stroke-width="0.8"/>
<g transform="rotate(-35 15.5 14.8)"><rect x="10.8" y="11.6" width="9.6" height="6.4" rx="2.2" fill="#fff" stroke="#111" stroke-width="1.1"/>
<path d="M13.5 13 V16.6 M15.8 13 V16.6" stroke="#2a5ec8" stroke-width="1.1"/><path d="M18 17.2 h2" stroke="#6a8ed8" stroke-width="0.8"/></g>
<path d="M22.5 30 L26 22.5 L29.5 30 Z" fill="#fff" stroke="#777" stroke-width="0.9" stroke-dasharray="1.1 0.9"/>
<rect x="26.5" y="26.5" width="7" height="7" fill="#12d012" stroke="#111" stroke-width="1.3"/>
<rect x="28" y="28" width="1" height="1" fill="#0a8a0a"/><rect x="28" y="30" width="1" height="1" fill="#0a8a0a"/><rect x="28" y="32" width="1" height="1" fill="#0a8a0a"/><rect x="30" y="28" width="1" height="1" fill="#0a8a0a"/><rect x="30" y="30" width="1" height="1" fill="#0a8a0a"/><rect x="30" y="32" width="1" height="1" fill="#0a8a0a"/><rect x="32" y="28" width="1" height="1" fill="#0a8a0a"/><rect x="32" y="30" width="1" height="1" fill="#0a8a0a"/><rect x="32" y="32" width="1" height="1" fill="#0a8a0a"/>
</svg>
<svg style="left:680px;top:55px" width="38" height="36" viewBox="0 0 38 36">
<rect x="4.5" y="6.5" width="29" height="24" fill="#fff" stroke="#b0b2b6" stroke-width="1.1"/><path d="M5 30.8 H33.5 V7" fill="none" stroke="#c9cbd0" stroke-width="0.8"/>
<rect x="6" y="8" width="26" height="3.5" fill="#e6e6e8"/>
<rect x="7.5" y="13.3" width="23" height="9.3" fill="#fff" stroke="#2a74d0" stroke-width="1.3"/><rect x="18.5" y="14.2" width="11" height="3" fill="#eef0f3"/>
<rect x="9" y="15.8" width="8" height="4" fill="#1e88e0"/>
<path d="M18.3 11.5 V24.5 M16 11.5 H20.6 M16 24.5 H20.6" stroke="#333" stroke-width="1"/>
</svg>
<svg style="left:745px;top:55px" width="38" height="36" viewBox="0 0 38 36">
<rect x="4.5" y="6.5" width="29" height="24" fill="#fff" stroke="#b0b2b6" stroke-width="1.1"/><path d="M5 30.8 H33.5 V7" fill="none" stroke="#c9cbd0" stroke-width="0.8"/>
<rect x="6" y="8" width="26" height="3.5" fill="#e6e6e8"/>
<rect x="7.5" y="13.3" width="23" height="9.3" fill="#fff" stroke="#2a74d0" stroke-width="1.3"/><rect x="18.5" y="14.2" width="11" height="3" fill="#eef0f3"/>
<rect x="9" y="15.8" width="8" height="4" fill="#1e88e0"/>
<path d="M18.3 11.5 V24.5 M16 11.5 H20.6 M16 24.5 H20.6" stroke="#333" stroke-width="1"/>

<path d="M15.5 17.5 H22.5 L27 22 V28.5 L22.5 33 H15.5 L11 28.5 V22 Z" fill="#ee1111" stroke="#c00" stroke-width="0.5"/>
<path d="M14.5 31 C13.5 28 13.5 26 14.5 24 L15 20.5 L16 24 L16.5 19.5 L18 24 L18.5 19 L19.8 24 L20.5 19.5 L21.5 24 L22.5 21.5 L23.5 25 C23.5 28 22.5 30 21.5 31 Z" fill="#fff"/>
</svg>
<svg style="left:823px;top:55px" width="38" height="36" viewBox="0 0 38 36">
<rect x="13.5" y="9" width="7" height="7.5" fill="#777"/><rect x="14.5" y="10" width="1" height="1" fill="#fff"/><rect x="14.5" y="12" width="1" height="1" fill="#fff"/><rect x="14.5" y="14" width="1" height="1" fill="#fff"/><rect x="16.5" y="10" width="1" height="1" fill="#fff"/><rect x="16.5" y="12" width="1" height="1" fill="#fff"/><rect x="16.5" y="14" width="1" height="1" fill="#fff"/><rect x="18.5" y="10" width="1" height="1" fill="#fff"/><rect x="18.5" y="12" width="1" height="1" fill="#fff"/><rect x="18.5" y="14" width="1" height="1" fill="#fff"/>
<path d="M8.5 20.5 L13 12.5 L17.5 20.5 Z" fill="#666" stroke="#111" stroke-width="1.1" stroke-linejoin="round"/>
<rect x="19.5" y="18" width="4" height="5" fill="#fff" stroke="#999" stroke-width="0.8"/>
<rect x="23.5" y="19.5" width="7" height="7" fill="#666" stroke="#111" stroke-width="1.3"/>
<rect x="25" y="21" width="1" height="1" fill="#bbb"/><rect x="25" y="23" width="1" height="1" fill="#bbb"/><rect x="25" y="25" width="1" height="1" fill="#bbb"/><rect x="27" y="21" width="1" height="1" fill="#bbb"/><rect x="27" y="23" width="1" height="1" fill="#bbb"/><rect x="27" y="25" width="1" height="1" fill="#bbb"/><rect x="29" y="21" width="1" height="1" fill="#bbb"/><rect x="29" y="23" width="1" height="1" fill="#bbb"/><rect x="29" y="25" width="1" height="1" fill="#bbb"/>
<circle cx="19.5" cy="18.3" r="13.2" fill="none" stroke="#f01010" stroke-width="2.6"/>
<path d="M9.5 27.5 L29.5 9" stroke="#f01010" stroke-width="3.4"/>
</svg>
<svg style="left:850px;top:770px" width="84" height="24" viewBox="0 0 84 24">
<ellipse cx="11.5" cy="6.5" rx="6" ry="1.8" fill="#e4e4e4" stroke="#aaa" stroke-width="0.8"/>
<path d="M5.5 6.5 V17.5 C5.5 19 17.5 19 17.5 17.5 V6.5" fill="#dcdcdc" stroke="#aaa" stroke-width="0.8"/>
<path d="M5.5 10.5 C5.5 12 17.5 12 17.5 10.5 M5.5 14 C5.5 15.5 17.5 15.5 17.5 14" fill="none" stroke="#b0b0b0" stroke-width="0.8"/>
<rect x="11" y="10" width="9.5" height="9.5" fill="#2a84d6" stroke="#1a5ea8" stroke-width="0.6"/>
<rect x="13" y="10.5" width="5.5" height="3.2" fill="#fff"/><rect x="13" y="15" width="5.5" height="4.2" fill="#fff"/><rect x="14.2" y="16.2" width="1.6" height="2.5" fill="#2a84d6"/>
<path d="M64.5 19.5 C64.5 16.5 66.5 14.2 69.5 13.8 L71 15 L72.5 13.8 C75.5 14.2 77.5 16.5 77.5 19.5 Z" fill="#eef0f4" stroke="#2c4da8" stroke-width="1.1" stroke-linejoin="round"/>
<ellipse cx="71.2" cy="10" rx="3" ry="3.6" fill="#f7d6ae" stroke="#b57a3a" stroke-width="0.5"/>
<path d="M67.6 10.5 C67 6.5 69 5 71.3 5 C73.8 5 75 6.5 74.6 8.5 C73 7.6 71 7.8 69.5 8.6 L68.8 11.5 Z" fill="#c0701c"/>
</svg>
</body></html>
